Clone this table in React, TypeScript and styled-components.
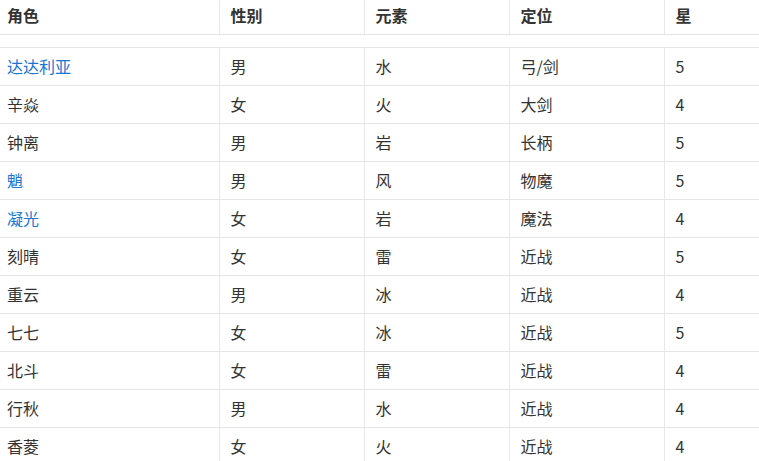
import React from "react";
import styled, { createGlobalStyle } from "styled-components";

const GlobalStyle = createGlobalStyle`
  html, body {
    margin: 0;
    padding: 0;
    background: #fff;
    overflow: hidden;
  }
  body {
    font-family: "Noto Sans CJK SC", "Noto Sans", sans-serif;
    color: #333;
  }
`;

const Table = styled.table`
  width: 100%;
  border-collapse: collapse;
  table-layout: fixed;
  font-size: 16px;
`;

const HeadCell = styled.th`
  text-align: left;
  font-weight: bold;
  color: #333;
  line-height: 25px;
  padding: 3px 10px 6px 11px;
  border-right: 1px solid #e8e8e8;
  border-bottom: 1px solid #e3e3e3;

  &:first-child {
    padding-left: 7px;
  }
  &:last-child {
    border-right: none;
  }
`;

const Cell = styled.td`
  line-height: 25px;
  padding: 6px 10px 6px 11px;
  color: #333;
  border-right: 1px solid #e8e8e8;
  border-bottom: 1px solid #e5e5e5;
  white-space: nowrap;

  &:first-child {
    padding-left: 7px;
  }
  &:last-child {
    border-right: none;
  }
`;

const SpacerCell = styled.td`
  height: 12px;
  padding: 0;
  border-bottom: 1px solid #e5e5e5;
`;

const Link = styled.a`
  color: #1976d2;
  text-decoration: none;
`;

type Role = {
  name: string;
  gender: string;
  element: string;
  role: string;
  star: number;
  link?: boolean;
};

const roles: Role[] = [
  { name: "达达利亚", gender: "男", element: "水", role: "弓/剑", star: 5, link: true },
  { name: "辛焱", gender: "女", element: "火", role: "大剑", star: 4 },
  { name: "钟离", gender: "男", element: "岩", role: "长柄", star: 5 },
  { name: "魈", gender: "男", element: "风", role: "物魔", star: 5, link: true },
  { name: "凝光", gender: "女", element: "岩", role: "魔法", star: 4, link: true },
  { name: "刻晴", gender: "女", element: "雷", role: "近战", star: 5 },
  { name: "重云", gender: "男", element: "冰", role: "近战", star: 4 },
  { name: "七七", gender: "女", element: "冰", role: "近战", star: 5 },
  { name: "北斗", gender: "女", element: "雷", role: "近战", star: 4 },
  { name: "行秋", gender: "男", element: "水", role: "近战", star: 4 },
  { name: "香菱", gender: "女", element: "火", role: "近战", star: 4 },
];

const App: React.FC = () => {
  return (
    <>
      <GlobalStyle />
      <Table>
        <colgroup>
          <col style={{ width: 219 }} />
          <col style={{ width: 145 }} />
          <col style={{ width: 145 }} />
          <col style={{ width: 155 }} />
          <col />
        </colgroup>
        <thead>
          <tr>
            <HeadCell>角色</HeadCell>
            <HeadCell>性别</HeadCell>
            <HeadCell>元素</HeadCell>
            <HeadCell>定位</HeadCell>
            <HeadCell>星</HeadCell>
          </tr>
        </thead>
        <tbody>
          <tr>
            <SpacerCell colSpan={5} />
          </tr>
          {roles.map((r) => (
            <tr key={r.name}>
              <Cell>{r.link ? <Link href="#">{r.name}</Link> : r.name}</Cell>
              <Cell>{r.gender}</Cell>
              <Cell>{r.element}</Cell>
              <Cell>{r.role}</Cell>
              <Cell>{r.star}</Cell>
            </tr>
          ))}
        </tbody>
      </Table>
    </>
  );
};

export default App;
